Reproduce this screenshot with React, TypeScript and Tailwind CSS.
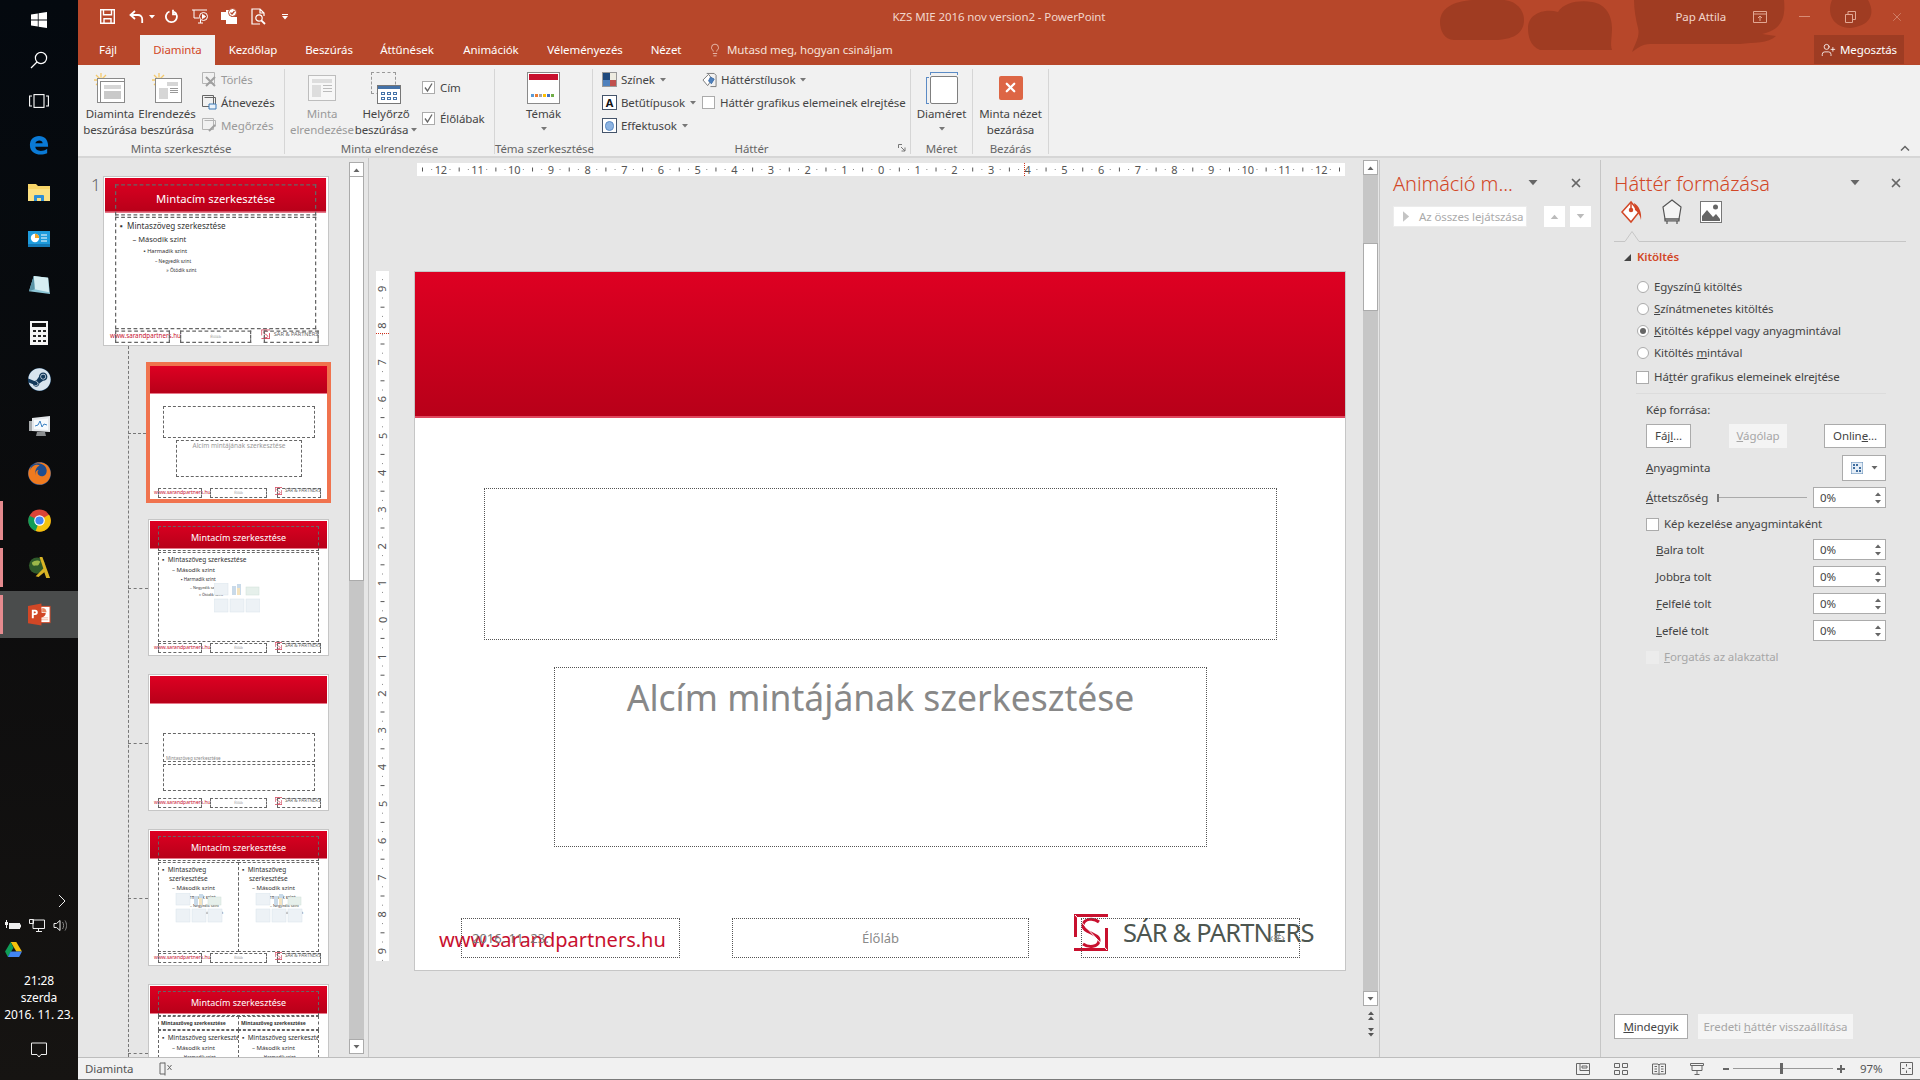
import type { ReactNode } from "react";
import { Lightbulb, UserPlus, X } from "lucide-react";
import { FaFirefox, FaSteam } from "react-icons/fa";

const sat = "#b7472a";

function Caret({ className = "" }: { className?: string }) {
  return (
    <svg viewBox="0 0 6 4" className={"w-[6px] h-[4px] " + className}>
      <path d="M0 0h6L3 3.5z" fill="currentColor" />
    </svg>
  );
}

function TaskIcon({ children, active, mark }: { children: ReactNode; active?: boolean; mark?: boolean }) {
  return (
    <div className={"relative h-[47px] flex items-center justify-center " + (active ? "bg-[#4a4c4c]" : "")}>
      {mark && <div className="absolute left-0 top-[4px] bottom-[4px] w-[3px] bg-[#e58a8e]" />}
      {children}
    </div>
  );
}

function Taskbar() {
  return (
    <div className="w-[78px] h-full shrink-0 flex flex-col bg-gradient-to-b from-[#04090f] via-[#0c0c0d] to-[#161412] text-white">
      <div className="h-[40px] flex items-center justify-center">
        <svg viewBox="0 0 16 16" className="w-[16px] h-[16px]" fill="#fff">
          <path d="M0 2.4 6.8 1.4V7.6H0zM7.6 1.3 16 0V7.6H7.6zM0 8.4H6.8V14.6L0 13.6zM7.6 8.4H16V16L7.6 14.7z" />
        </svg>
      </div>
      <div className="h-[40px] flex items-center justify-center">
        <svg viewBox="0 0 18 18" className="w-[18px] h-[18px]" fill="none" stroke="#fff" strokeWidth="1.2">
          <circle cx="11" cy="7" r="5.6" />
          <path d="M7 11 1 17" />
        </svg>
      </div>
      <div className="h-[41px] flex items-center justify-center">
        <svg viewBox="0 0 20 14" className="w-[20px] h-[14px]" fill="none" stroke="#fff" strokeWidth="1.1">
          <rect x="5" y="0.6" width="10" height="12.8" />
          <path d="M3 2H.6v10H3M17 2h2.4v10H17" />
        </svg>
      </div>
      <TaskIcon>
        <svg viewBox="0 0 22 22" className="w-[20px] h-[20px]">
          <path
            fillRule="evenodd"
            d="M1 11C1 5 5 1 11 1c6 0 10 4 10 11v1H7c0 5 8 6 13 2v5c-7 3-19 2-19-9zM7 9h8c0-4-7-4-8 0z"
            fill="#0a7ad6"
          />
        </svg>
      </TaskIcon>
      <TaskIcon>
        <svg viewBox="0 0 22 20" className="w-[22px] h-[20px]">
          <path d="M0 2h8l2 2h12v15H0z" fill="#f8d568" />
          <path d="M0 7h22v12H0z" fill="#fce183" />
          <path d="M6 19v-5a1 1 0 0 1 1-1h8a1 1 0 0 1 1 1v5h-3v-3H9v3z" fill="#2f8fd6" />
        </svg>
      </TaskIcon>
      <TaskIcon>
        <svg viewBox="0 0 22 16" className="w-[22px] h-[16px]">
          <rect width="22" height="16" fill="#1e9bdc" />
          <circle cx="7" cy="7" r="4.2" fill="#fff" />
          <path d="M7 7V2.8A4.2 4.2 0 0 1 11.2 7z" fill="#f5a623" />
          <path d="M13 4h6M13 7h6M13 10h6" stroke="#fff" strokeWidth="1.2" />
          <path d="M0 13h22v3H0z" fill="#1378b5" />
        </svg>
      </TaskIcon>
      <TaskIcon>
        <svg viewBox="0 0 24 22" className="w-[23px] h-[21px]">
          <path d="M6 1 21 3l2 17L1 17z" fill="#8fc8d8" />
          <path d="M6 1 21 3l1 15-15-3z" fill="#d6eef2" />
          <path d="M1 17 6 1l1 14z" fill="#5b94a6" />
        </svg>
      </TaskIcon>
      <TaskIcon>
        <svg viewBox="0 0 18 24" className="w-[18px] h-[24px]">
          <rect width="18" height="24" fill="#f4f4f4" />
          <rect x="2" y="2" width="14" height="4" fill="#111" />
          <path d="M3 9h3v2H3zM8 9h3v2H8zM13 9h3v2h-3zM3 14h3v2H3zM8 14h3v2H8zM13 14h3v2h-3zM3 19h3v2H3zM8 19h3v2H8zM13 19h3v2h-3z" fill="#222" />
        </svg>
      </TaskIcon>
      <TaskIcon>
        <div className="w-[23px] h-[23px] rounded-full bg-[#143a5c] flex items-center justify-center">
          <FaSteam className="w-[23px] h-[23px] text-[#d8e4ee]" />
        </div>
      </TaskIcon>
      <TaskIcon>
        <svg viewBox="0 0 24 22" className="w-[24px] h-[22px]">
          <path d="M2 5h4v10H2z" fill="#a9acae" />
          <path d="M5 2 23 0v16L5 15z" fill="#e4e7ea" />
          <path d="M7 4l14-1.5V14L7 13z" fill="#f7fafc" />
          <path d="M8 10l3-1 2-4 2 6 2-3 3 1" fill="none" stroke="#3b82c4" strokeWidth="1" />
          <path d="M10 16h8l1 4H9z" fill="#8a8d8f" />
        </svg>
      </TaskIcon>
      <TaskIcon>
        <div className="w-[23px] h-[23px] rounded-full bg-[#1f4d8f] flex items-center justify-center">
          <FaFirefox className="w-[23px] h-[23px] text-[#ef7a1f]" />
        </div>
      </TaskIcon>
      <TaskIcon mark>
        <svg viewBox="0 0 24 24" className="w-[23px] h-[23px]">
          <circle cx="12" cy="12" r="11.5" fill="#db4437" />
          <path d="M12 12 22 6a11.5 11.5 0 0 1-5 16.8z" fill="#f4c20d" />
          <path d="M12 12 7 22.5A11.5 11.5 0 0 0 17 22.8L22 6z" fill="#f4c20d" />
          <path d="M12 12 1.5 7A11.5 11.5 0 0 0 8 23z" fill="#0f9d58" />
          <circle cx="12" cy="12" r="5.5" fill="#fff" />
          <circle cx="12" cy="12" r="4.3" fill="#4285f4" />
        </svg>
      </TaskIcon>
      <TaskIcon mark>
        <svg viewBox="0 0 24 24" className="w-[23px] h-[23px]">
          <circle cx="9.5" cy="10" r="8.5" fill="#2f5a2a" />
          <path d="M4 7c3-3 7-3 9-1-2 2-1 4-4 4S5 11 4 7z" fill="#9cb84a" />
          <path d="M12 1h3l8 22h-4l-2-6-6 5-3-1 8-8z" fill="#d9b425" />
        </svg>
      </TaskIcon>
      <TaskIcon active mark>
        <svg viewBox="0 0 24 24" className="w-[23px] h-[23px]">
          <rect x="9" y="3.5" width="14" height="17" fill="#fff" stroke="#d24726" />
          <path d="M14 6a4.5 4.5 0 1 0 4.5 4.5H14z" fill="#d24726" />
          <path d="M15 5.5a4 4 0 0 1 4 4h-4zM13 15.5h8M13 17.5h8" fill="#e9855f" stroke="#e9855f" strokeWidth=".6" />
          <path d="M0 3 14 .6v22.8L0 21z" fill="#d24726" />
          <path d="M4 7h3.5a2.7 2.7 0 0 1 0 5.4H6V16H4zM6 8.8v1.900h1.200a.95.95 0 0 0 0-1.900z" fill="#fff" />
        </svg>
      </TaskIcon>

      <div className="mt-auto pb-[10px] flex flex-col">
        <div className="h-[20px] flex items-center justify-end pr-[12px]">
          <svg viewBox="0 0 8 14" className="w-[8px] h-[14px]" fill="none" stroke="#eee" strokeWidth="1">
            <path d="M1 1l6 6-6 6" />
          </svg>
        </div>
        <div className="h-[26px] mt-px flex items-center gap-[8px] pl-[5px]">
          <svg viewBox="0 0 16 12" className="w-[16px] h-[12px]" fill="#eee">
            <path d="M4 4h11v6H4zM15 5.5h1v3h-1zM0 3h1V1h1v2h1v3H2v3H1V6H0z" />
          </svg>
          <svg viewBox="0 0 16 13" className="w-[16px] h-[13px]" fill="none" stroke="#eee">
            <path d="M4 1h11.5v8.5H4zM.5.5h4v4h-4zM7 12.5h6M9.5 9.500v3" />
          </svg>
          <svg viewBox="0 0 16 13" className="w-[16px] h-[13px]" fill="none" stroke="#eee">
            <path d="M1 4.5h2.5L7 1.5v10l-3.500-3H1z" />
            <path d="M9.5 3c1.500 2 1.500 5 0 7M12 1.500c2 3 2 7 0 10" stroke="#888" />
          </svg>
        </div>
        <div className="h-[22px] flex items-center pl-[5px]">
          <svg viewBox="0 0 18 16" className="w-[17px] h-[15px]">
            <path d="M6 0h6l6 10h-6z" fill="#f4c20d" />
            <path d="M6 0 0 10l3 6 6-10z" fill="#0f9d58" />
            <path d="M3 16h12l3-6H6z" fill="#4285f4" />
          </svg>
        </div>
        <div className="mt-[12px] text-[12px] leading-[17px] text-center">
          <div>21:28</div>
          <div>szerda</div>
          <div>2016. 11. 23.</div>
        </div>
        <div className="h-[40px] mt-[7px] flex items-center justify-center">
          <svg viewBox="0 0 16 16" className="w-[16px] h-[16px]" fill="none" stroke="#eee">
            <path d="M.5 1h15v11.5H10L8 15l-2-2.500H.5z" />
          </svg>
        </div>
      </div>
    </div>
  );
}

function QatIcons() {
  return (
    <div className="flex items-center h-[33px] text-white">
      <svg viewBox="0 0 15 15" className="w-[15px] h-[15px] ml-[22px]" fill="none" stroke="#fff" strokeWidth="1.4">
        <path d="M.7.7h13.6v13.6H.7zM3.5.7v5h8v-5M4 14.3V9.800h7v4.500" />
      </svg>
      <svg viewBox="0 0 15 14" className="w-[15px] h-[14px] ml-[14px]" fill="none" stroke="#fff" strokeWidth="1.8">
        <path d="M6 1 1.5 5 6 9M2 5h7a4.2 4.2 0 0 1 4.2 4.2V13" />
      </svg>
      <Caret className="ml-[5px] text-white" />
      <svg viewBox="0 0 14 15" className="w-[14px] h-[15px] ml-[9px]" fill="none" stroke="#fff" strokeWidth="1.8">
        <path d="M5.5 2.5a5.5 5.5 0 1 0 4.5.3M9 .8v4.500h3.800" />
      </svg>
      <svg viewBox="0 0 17 16" className="w-[17px] h-[16px] ml-[14px]" fill="none" stroke="#fff">
        <path d="M0 1h15M2 1v8h5M6 14h5M8.5 11v3" />
        <circle cx="11.5" cy="7.5" r="4" />
        <path d="M10.5 5.5v4l3-2z" fill="#fff" />
      </svg>
      <svg viewBox="0 0 18 17" className="w-[18px] h-[17px] ml-[11px]">
        <path d="M1 4h5V2h4v2h1v5h6v7H6v-4H1z" fill="#fff" />
        <circle cx="12.5" cy="4.5" r="4" fill="#fff" stroke={sat} />
        <path d="M10.5 4.5l1.500 1.500 2.500-3" fill="none" stroke={sat} strokeWidth="1.2" />
      </svg>
      <svg viewBox="0 0 15 17" className="w-[15px] h-[17px] ml-[13px]" fill="none" stroke="#fff" strokeWidth="1.2">
        <path d="M9 16H1V1h8l4 4v3M9 1v4h4" />
        <circle cx="8" cy="10" r="3.2" />
        <path d="M10.3 12.3 14 16" strokeWidth="1.8" />
      </svg>
      <div className="ml-[16px] flex flex-col items-center gap-[1px]">
        <div className="w-[6px] h-px bg-white" />
        <Caret className="text-white" />
      </div>
    </div>
  );
}

const tabs: { label: string; cls: string }[] = [
  { label: "Kezdőlap", cls: "w-[70px] pl-[6px]" },
  { label: "Beszúrás", cls: "w-[88px]" },
  { label: "Áttűnések", cls: "w-[68px]" },
  { label: "Animációk", cls: "w-[100px]" },
  { label: "Véleményezés", cls: "w-[88px]" },
  { label: "Nézet", cls: "w-[74px]" },
];

function TitleBar() {
  return (
    <div className="relative h-[65px] shrink-0 bg-[#b7472a] text-white overflow-hidden">
      <svg viewBox="0 0 440 52" className="absolute left-[1362px] top-0 w-[440px] h-[52px]" fill="#a03c22">
        <path d="M0 22C0 6 18 0 36 0h26c14 0 22 10 22 20 0 14-12 20-30 20-8 0-16 0-24 0L14 40C4 40 0 30 0 22z" />
        <path d="M88 28C88 14 104 8 118 12 124 2 140 0 152 2c14 2 20 14 20 26 0 10-2 16 0 22H100C90 46 88 36 88 28z" />
        <path d="M194 0h150c2 20-4 30-22 34l14 2c-8 8-22 6-36 8H210c-8 0-12 4-18 8 4-10 8-16 6-24-2-8-4-18-4-28z" />
        <path d="M392 0h36c8 14 2 26-18 28-16 0-24-14-18-28z" />
      </svg>
      <div className="relative grid grid-cols-[1fr_auto_1fr] h-[35px]">
        <QatIcons />
        <div className="flex items-center h-[33px] text-[11.5px] text-[#f2d6cc]">KZS MIE 2016 nov version2 - PowerPoint</div>
        <div className="flex items-center justify-end h-[33px] text-[11.5px] text-[#f2d6cc]">
          <span className="mr-[27px]">Pap Attila</span>
          <svg viewBox="0 0 14 12" className="w-[14px] h-[12px] mr-[32px]" fill="none" stroke="#e2a793">
            <path d="M.5.5h13v11H.5zM.5 3h13M7 10V5M5 7l2-2 2 2" />
          </svg>
          <div className="w-[11px] h-px bg-[#d88c75] mr-[35px]" />
          <svg viewBox="0 0 11 12" className="w-[11px] h-[12px] mr-[34px]" fill="none" stroke="#e2a793">
            <path d="M.5 3.5h7v8h-7zM3 3.5V.5h7.500v8H7.500" />
          </svg>
          <X className="w-[14px] h-[14px] mr-[16px] text-[#e2a793]" strokeWidth={1} />
        </div>
      </div>
      <div className="relative flex items-stretch h-[30px] text-[11.5px]">
        <div className="ml-[4px] w-[52px] flex items-center justify-center">Fájl</div>
        <div className="ml-[6px] w-[75px] flex items-center justify-center bg-[#f1f1f1] text-[#d24726]">Diaminta</div>
        {tabs.map((t) => (
          <div key={t.label} className={t.cls + " flex items-center justify-center"}>
            {t.label}
          </div>
        ))}
        <div className="ml-[5px] flex items-center text-[#f6e2da]">
          <Lightbulb className="w-[14px] h-[16px] mr-[5px]" strokeWidth={1.2} />
          Mutasd meg, hogyan csináljam
        </div>
        <div className="ml-auto mr-[16px] mb-px w-[90px] bg-[#9e3c23] flex items-center justify-center gap-[4px]">
          <UserPlus className="w-[15px] h-[16px]" strokeWidth={1.3} />
          Megosztás
        </div>
      </div>
    </div>
  );
}

function Group({ w, label, children, launcher }: { w: string; label: string; children: ReactNode; launcher?: boolean }) {
  return (
    <div className={w + " relative h-[85px] mt-[4px] border-r border-[#d6d6d6] flex flex-col"}>
      <div className="h-[70px] shrink-0 flex items-start">{children}</div>
      <div className="shrink-0 text-center text-[11.5px] leading-[15px] text-[#666] mt-[2px] whitespace-nowrap">{label}</div>
      {launcher && (
        <svg viewBox="0 0 8 8" className="absolute right-[4px] bottom-[2px] w-[8px] h-[8px]" fill="none" stroke="#777">
          <path d="M.5 4V.5H4M3 3l4 4M7 3.5V7H3.5" />
        </svg>
      )}
    </div>
  );
}

function BigBtn({ w, icon, lines, caret, dim, ml }: { w: string; icon: ReactNode; lines: ReactNode[]; caret?: boolean; dim?: boolean; ml?: string }) {
  return (
    <div className={w + " " + (ml ?? "") + " flex flex-col items-center " + (dim ? "text-[#9a9a9a]" : "text-[#444]")}>
      <div className="h-[37px] w-full flex items-center justify-center">{icon}</div>
      <div className="text-[11.5px] leading-[16px] text-center whitespace-nowrap">
        {lines.map((l, i) => (
          <div key={i}>{l}</div>
        ))}
      </div>
      {caret && <Caret className="mt-[5px] text-[#777]" />}
    </div>
  );
}

function SmallBtn({ icon, label, dim, caret }: { icon: ReactNode; label: string; dim?: boolean; caret?: boolean }) {
  return (
    <div className={"h-[23px] flex items-center gap-[4px] text-[11.5px] whitespace-nowrap " + (dim ? "text-[#9a9a9a]" : "text-[#444]")}>
      <div className="w-[15px] h-[16px] flex items-center justify-center shrink-0">{icon}</div>
      {label}
      {caret && <Caret className="text-[#777] ml-[1px]" />}
    </div>
  );
}

function CheckBox({ on, dim, white = true }: { on?: boolean; dim?: boolean; white?: boolean }) {
  return (
    <div className={"w-[13px] h-[13px] shrink-0 border flex items-center justify-center " + (dim ? "border-[#ececec] bg-[#ececec]" : "border-[#ababab]") + " " + (white ? "bg-white" : "")}>
      {on && (
        <svg viewBox="0 0 11 11" className="w-[11px] h-[11px]" fill="none" stroke="#666" strokeWidth="1.3">
          <path d="M2 5.5 4.5 9 9 1.5" />
        </svg>
      )}
    </div>
  );
}

function Sun() {
  return (
    <svg viewBox="0 0 14 14" className="absolute left-0 top-0 w-[14px] h-[14px]">
      <path d="M7 0v14M0 7h14M2 2l10 10M12 2 2 12" stroke="#f4c96c" strokeWidth="1.3" />
      <circle cx="7" cy="7" r="3" fill="#fbe3a8" />
    </svg>
  );
}

function Ribbon() {
  return (
    <div className="relative h-[93px] shrink-0 bg-[#f1f1f1] border-b-2 border-[#d6d6d6] flex">
      <Group w="w-[207px]" label="Minta szerkesztése">
        <div className="flex pl-[2px]">
          <BigBtn
            w="w-[60px]"
            lines={["Diaminta", "beszúrása"]}
            icon={
              <div className="relative w-[32px] h-[30px]">
                <Sun />
                <div className="absolute left-[3px] top-[5px] w-[28px] h-[25px] border border-[#8a8a8a] bg-white" />
                <div className="absolute left-[6px] top-[8px] w-[25px] h-[22px] border border-[#8a8a8a] bg-white p-[3px] flex flex-col gap-[2px]">
                  <div className="h-[4px] bg-[#d6d6d6]" />
                  <div className="flex-1 bg-[#c9c9c9]" />
                </div>
              </div>
            }
          />
          <BigBtn
            w="w-[54px]"
            lines={["Elrendezés", "beszúrása"]}
            icon={
              <div className="relative w-[30px] h-[30px]">
                <Sun />
                <div className="absolute left-[3px] top-[5px] w-[27px] h-[25px] border border-[#8a8a8a] bg-white p-[3px] flex flex-col gap-[2px]">
                  <div className="h-[4px] bg-[#d6d6d6] ml-[8px]" />
                  <div className="flex-1 flex gap-[2px]">
                    <div className="w-[9px] bg-[#d6d6d6]" />
                    <div className="flex-1 flex flex-col gap-[1px]">
                      <div className="h-px bg-[#999]" />
                      <div className="h-px bg-[#999]" />
                      <div className="h-px bg-[#999]" />
                    </div>
                  </div>
                </div>
              </div>
            }
          />
          <div className="ml-[8px] -mt-px flex flex-col">
            <SmallBtn
              dim
              label="Törlés"
              icon={
                <svg viewBox="0 0 15 15" className="w-[15px] h-[15px]" fill="none" stroke="#b5b5b5">
                  <path d="M.5.5h12v11H.5z" />
                  <path d="M4 5l9 9M13 5l-9 9" stroke="#a0a0a0" strokeWidth="2" />
                </svg>
              }
            />
            <SmallBtn
              label="Átnevezés"
              icon={
                <svg viewBox="0 0 15 15" className="w-[15px] h-[15px]" fill="none" stroke="#666">
                  <path d="M.5.5h11v11H.5zM2.5 2.5h11v11" />
                  <path d="M7 9h7v5H7z" fill="#eaf2fa" stroke="#3b78b5" />
                </svg>
              }
            />
            <SmallBtn
              dim
              label="Megőrzés"
              icon={
                <svg viewBox="0 0 15 15" className="w-[15px] h-[15px]" fill="none" stroke="#b5b5b5">
                  <path d="M.5.5h11v11H.5zM2.5 2.5h11v6" />
                  <path d="M7 13l3-3 3-3" stroke="#a0a0a0" strokeWidth="2" />
                </svg>
              }
            />
          </div>
        </div>
      </Group>
      <Group w="w-[210px]" label="Minta elrendezése">
        <div className="flex pl-[6px]">
          <BigBtn
            w="w-[62px]"
            dim
            lines={["Minta", "elrendezése"]}
            icon={
              <div className="w-[28px] h-[26px] border border-[#bdbdbd] bg-[#f7f7f7] p-[3px] flex flex-col gap-[2px]">
                <div className="h-[4px] bg-[#ddd]" />
                <div className="flex-1 flex gap-[2px]">
                  <div className="w-[9px] bg-[#ddd]" />
                  <div className="flex-1 flex flex-col gap-[2px]">
                    <div className="h-px bg-[#bbb]" />
                    <div className="h-px bg-[#bbb]" />
                    <div className="h-px bg-[#bbb]" />
                  </div>
                </div>
              </div>
            }
          />
          <BigBtn
            w="w-[58px]"
            ml="ml-[4px]"
            lines={[
              "Helyőrző",
              <span className="inline-flex items-center gap-[3px]" key="b">
                beszúrása
                <Caret className="text-[#777]" />
              </span>,
            ]}
            icon={
              <div className="relative w-[30px] h-[32px]">
                <div className="absolute left-0 top-0 w-[25px] h-[22px] border border-dashed border-[#999]" />
                <div className="absolute left-[6px] top-[13px] w-[24px] h-[19px] border border-[#777] bg-white">
                  <div className="h-[3px] bg-[#4472a8]" />
                  <div className="grid grid-cols-3 gap-[2px] p-[3px]">
                    {[0, 1, 2, 3, 4, 5].map((i) => (
                      <div key={i} className="h-[3px] border border-[#4472a8]" />
                    ))}
                  </div>
                </div>
              </div>
            }
          />
          <div className="ml-[7px] text-[11.5px] text-[#444] flex flex-col">
            <div className="h-[31px] mt-[3px] flex items-center gap-[5px]">
              <CheckBox on />
              Cím
            </div>
            <div className="h-[31px] flex items-center gap-[5px]">
              <CheckBox on />
              Élőlábak
            </div>
          </div>
        </div>
      </Group>
      <Group w="w-[98px]" label="Téma szerkesztése">
        <div className="w-full">
          <BigBtn
            w="w-full"
            lines={["Témák"]}
            caret
            icon={
              <div className="w-[33px] h-[32px] border border-[#8a8a8a] bg-white flex flex-col p-px">
                <div className="h-[6px] bg-[#c8102e]" />
                <div className="flex-1" />
                <div className="flex gap-px px-[2px] pb-[5px]">
                  {["bg-[#5b9bd5]", "bg-[#ed7d31]", "bg-[#a5a5a5]", "bg-[#ffc000]", "bg-[#4472c4]", "bg-[#70ad47]"].map((c) => (
                    <div key={c} className={c + " w-[3px] h-[3px]"} />
                  ))}
                </div>
              </div>
            }
          />
        </div>
      </Group>
      <Group w="w-[318px]" label="Háttér" launcher>
        <div className="flex pl-[9px] -mt-px">
          <div className="w-[100px] flex flex-col">
            <SmallBtn
              label="Színek"
              caret
              icon={
                <div className="w-[15px] h-[15px] grid grid-cols-2 border border-[#999]">
                  <div className="bg-[#1f497d]" />
                  <div className="bg-[#eeece1]" />
                  <div className="bg-[#4f81bd]" />
                  <div className="bg-[#c0504d]" />
                </div>
              }
            />
            <SmallBtn
              label="Betűtípusok"
              caret
              icon={
                <div className="w-[15px] h-[15px] border border-[#44546a] bg-white flex items-center justify-center text-[11px] leading-none text-[#111] font-bold">A</div>
              }
            />
            <SmallBtn
              label="Effektusok"
              caret
              icon={
                <div className="w-[15px] h-[15px] border border-[#44546a] bg-white flex items-center justify-center">
                  <div className="w-[9px] h-[10px] rounded-full bg-[#8db4e2] border border-[#5b8bc5]" />
                </div>
              }
            />
          </div>
          <div className="flex flex-col">
            <SmallBtn
              label="Háttérstílusok"
              caret
              icon={
                <svg viewBox="0 0 16 16" className="w-[16px] h-[16px]" fill="none" stroke="#777">
                  <path d="M1 8l6-6 4 5-5 7z" fill="#fff" />
                  <path d="M5 1h8l2 2v12H9" />
                  <path d="M9 5l4 2-3 5-3-3z" fill="#4f81bd" stroke="#3b6ca8" />
                </svg>
              }
            />
            <div className="h-[23px] flex items-center gap-[5px] text-[11.5px] text-[#444] whitespace-nowrap">
              <CheckBox />
              Háttér grafikus elemeinek elrejtése
            </div>
          </div>
        </div>
      </Group>
      <Group w="w-[62px]" label="Méret">
        <div className="w-full">
          <BigBtn
            w="w-full"
            lines={["Diaméret"]}
            caret
            icon={
              <div className="relative w-[32px] h-[32px]">
                <div className="absolute left-[4px] top-0 right-0 h-[3px] border-x border-t border-[#5b8bc5]" />
                <div className="absolute left-0 top-[5px] bottom-0 w-[3px] border-y border-l border-[#5b8bc5]" />
                <div className="absolute left-[4px] top-[4px] right-0 bottom-0 rounded-[2px] border border-[#7f7f7f] bg-white" />
              </div>
            }
          />
        </div>
      </Group>
      <Group w="w-[76px]" label="Bezárás">
        <div className="w-full">
          <BigBtn
            w="w-full"
            lines={["Minta nézet", "bezárása"]}
            icon={
              <div className="w-[24px] h-[24px] rounded-[2px] bg-[#dd6645] flex items-center justify-center">
                <X className="w-[15px] h-[15px] text-white" strokeWidth={3.6} />
              </div>
            }
          />
        </div>
      </Group>
      <svg viewBox="0 0 10 6" className="absolute right-[10px] bottom-[5px] w-[10px] h-[6px]" fill="none" stroke="#666" strokeWidth="1.5">
        <path d="M1 5.5 5 1.5l4 4" />
      </svg>
    </div>
  );
}

const ph = "absolute border border-dashed border-[#666]";

function MiniFooter() {
  return (
    <>
      <div className="absolute left-[4px] top-[123px] text-[5px] leading-[7px] text-[#c8102e] whitespace-nowrap">www.sarandpartners.hu</div>
      <div className={ph + " left-[8px] top-[122px] w-[44px] h-[10px]"} />
      <div className={ph + " left-[60px] top-[122px] w-[57px] h-[10px] flex items-center justify-center text-[3px] text-[#999]"}>Élőláb</div>
      <LogoMark className="absolute left-[125px] top-[121px] w-[7px] h-[8px]" />
      <div className="absolute left-[135px] top-[121px] text-[4.5px] leading-[7px] text-[#666] whitespace-nowrap">SÁR & PARTNERS</div>
      <div className={ph + " left-[127px] top-[122px] w-[44px] h-[10px]"} />
    </>
  );
}

function MiniTitle() {
  return <div className={ph + " left-[8px] top-[5px] w-[161px] h-[25px] pb-[2px] flex items-center justify-center text-white text-[9px]"}>Mintacím szerkesztése</div>;
}

function MiniList({ compact }: { compact?: boolean }) {
  return (
    <div className="pl-[3px] pt-[2px] text-[#333] whitespace-nowrap overflow-hidden">
      <div className="text-[6.5px] leading-[10px]">▪ &nbsp;{compact ? "Mintaszöveg" : "Mintaszöveg szerkesztése"}</div>
      {compact && <div className="text-[6.5px] leading-[8px] pl-[7px]">szerkesztése</div>}
      <div className="text-[6px] leading-[10px] pl-[10px]">– Második szint</div>
      <div className="text-[4.5px] leading-[9px] pl-[19px]">▪ Harmadik szint</div>
      <div className="text-[3.8px] leading-[7px] pl-[28px]">– Negyedik szint</div>
      <div className="text-[3.8px] leading-[7px] pl-[37px]">» Ötödik szint</div>
    </div>
  );
}

function PaleIcons({ className }: { className: string }) {
  return (
    <svg viewBox="0 0 46 30" className={"absolute " + className}>
      <g fill="#edf2f6" stroke="#d8e2ea" strokeWidth=".5">
        <rect x="0" y="0" width="14" height="12" />
        <rect x="0" y="16" width="14" height="13" />
        <rect x="16" y="16" width="14" height="13" />
        <rect x="32" y="16" width="14" height="13" />
      </g>
      <path d="M18 12V3h4v9zM23 12V1h4v11z" fill="#c9dae9" />
      <path d="M23 12V5h3v7z" fill="#f4e3bf" />
      <rect x="32" y="4" width="13" height="8" fill="#e6f0eb" stroke="#cfe0d8" strokeWidth=".5" />
    </svg>
  );
}

function Mini({ kind }: { kind: number }) {
  return (
    <div className="relative w-[177px] h-[133px] bg-white overflow-hidden tracking-normal">
      <div className="h-[28px] bg-gradient-to-b from-[#de0022] to-[#b80019] border-b border-[#e6788a]" />
      {kind === 1 && (
        <>
          <MiniTitle />
          <div className={ph + " left-[8px] top-[31px] w-[161px] h-[90px]"}>
            <MiniList />
          </div>
        </>
      )}
      {kind === 2 && (
        <>
          <div className={ph + " left-[13px] top-[40px] w-[152px] h-[32px]"} />
          <div className={ph + " left-[26px] top-[74px] w-[126px] h-[37px] text-center text-[6.5px] leading-[10px] text-[#999]"}>Alcím mintájának szerkesztése</div>
        </>
      )}
      {kind === 3 && (
        <>
          <MiniTitle />
          <div className={ph + " left-[8px] top-[31px] w-[161px] h-[90px]"}>
            <MiniList />
            <PaleIcons className="left-[55px] top-[30px] w-[46px] h-[30px]" />
          </div>
        </>
      )}
      {kind === 4 && (
        <>
          <div className={ph + " left-[13px] top-[57px] w-[152px] h-[29px]"}>
            <div className="absolute left-[2px] bottom-0 text-[4.5px] leading-[6px] text-[#888] whitespace-nowrap">Mintaszöveg szerkesztése</div>
          </div>
          <div className={ph + " left-[13px] top-[88px] w-[152px] h-[27px]"} />
        </>
      )}
      {kind === 5 && (
        <>
          <MiniTitle />
          <div className={ph + " left-[8px] top-[31px] w-[81px] h-[90px]"}>
            <MiniList compact />
            <PaleIcons className="left-[16px] top-[30px] w-[48px] h-[30px]" />
          </div>
          <div className={ph + " left-[88px] top-[31px] w-[81px] h-[90px]"}>
            <MiniList compact />
            <PaleIcons className="left-[16px] top-[30px] w-[48px] h-[30px]" />
          </div>
        </>
      )}
      {kind === 6 && (
        <>
          <MiniTitle />
          <div className={ph + " left-[8px] top-[30px] w-[81px] h-[14px] text-[5px] font-bold text-[#333] pl-[2px] leading-[12px] whitespace-nowrap overflow-hidden"}>Mintaszöveg szerkesztése</div>
          <div className={ph + " left-[88px] top-[30px] w-[81px] h-[14px] text-[5px] font-bold text-[#333] pl-[2px] leading-[12px] whitespace-nowrap overflow-hidden"}>Mintaszöveg szerkesztése</div>
          <div className={ph + " left-[8px] top-[44px] w-[81px] h-[78px]"}>
            <MiniList />
          </div>
          <div className={ph + " left-[88px] top-[44px] w-[81px] h-[78px]"}>
            <MiniList />
          </div>
        </>
      )}
      {kind !== 6 && <MiniFooter />}
    </div>
  );
}

function ThumbRow({ kind, selected }: { kind: number; selected?: boolean }) {
  return (
    <div className={"relative h-[155px] shrink-0 flex items-center justify-end " + (selected ? "pr-[18px]" : "pr-[20px]")}>
      <div className={"absolute left-[50px] top-1/2 h-px border-t border-dashed border-[#777] " + (selected ? "w-[18px]" : "w-[20px]")} />
      <div className={selected ? "border-[4px] border-[#f0734e]" : "border border-[#c6c6c6] p-px bg-white"}>
        <Mini kind={kind} />
      </div>
    </div>
  );
}

function ThumbPane() {
  return (
    <div className="relative w-[271px] shrink-0 overflow-hidden flex flex-col">
      <div className="absolute left-[50px] top-[188px] bottom-0 border-l border-dashed border-[#777]" />
      <div className="relative h-[188px] shrink-0 pt-[18px] flex justify-end pr-[20px] mb-[9px]">
        <div className="absolute left-[13px] top-[14px] text-[17px] font-light text-[#666]">1</div>
        <div className="border border-[#c6c6c6] p-px bg-white h-[170px]">
          <div className="w-[222px] h-[166px]">
            <div className="scale-125 origin-top-left w-[177px]">
              <Mini kind={1} />
            </div>
          </div>
        </div>
      </div>
      <ThumbRow kind={2} selected />
      <ThumbRow kind={3} />
      <ThumbRow kind={4} />
      <ThumbRow kind={5} />
      <ThumbRow kind={6} />
    </div>
  );
}

function ScrollBtn({ up, bordered = true }: { up: boolean; bordered?: boolean }) {
  return (
    <div className={"w-[15px] h-[15px] shrink-0 flex items-center justify-center " + (bordered ? "bg-white border border-[#ababab]" : "")}>
      <Caret className={"text-[#666] w-[7px] " + (up ? "rotate-180" : "")} />
    </div>
  );
}

function TopRuler() {
  const marks: ReactNode[] = [];
  for (let i = -50; i <= 50; i++) {
    const x = 464 + i * 9.17;
    if (i % 4 === 0) {
      marks.push(
        <text key={i} x={x} y={10.5} textAnchor="middle" fontSize="11" fill="#555" fontFamily="Noto Sans, sans-serif">
          {Math.abs(i / 4)}
        </text>
      );
    } else if (i % 2 === 0) {
      marks.push(<path key={i} d={`M${x} 4.5v4`} stroke="#555" />);
    } else {
      marks.push(<path key={i} d={`M${x} 6v1`} stroke="#888" />);
    }
  }
  return (
    <svg viewBox="0 0 928 13" className="w-[928px] h-[13px] bg-white">
      {marks}
      <path d="M607.5 0v13" stroke="#d2321c" strokeDasharray="1 1" />
    </svg>
  );
}

function LeftRuler() {
  const marks: ReactNode[] = [];
  for (let i = -37; i <= 37; i++) {
    const y = 349 + i * 9.2;
    if (i % 4 === 0) {
      marks.push(
        <text key={i} x="6.5" y={y + 4} textAnchor="middle" fontSize="11" fill="#555" fontFamily="Noto Sans, sans-serif" transform={`rotate(-90 6.5 ${y})`}>
          {Math.abs(i / 4)}
        </text>
      );
    } else if (i % 2 === 0) {
      marks.push(<path key={i} d={`M4.5 ${y}h4`} stroke="#555" />);
    } else {
      marks.push(<path key={i} d={`M6 ${y}h1`} stroke="#888" />);
    }
  }
  return (
    <svg viewBox="0 0 13 690" className="w-[13px] h-[690px] bg-white shrink-0">
      {marks}
      <path d="M0 62.5h13" stroke="#d2321c" strokeDasharray="1 1" />
    </svg>
  );
}

function LogoMark({ className }: { className: string }) {
  return (
    <svg viewBox="0 0 34 37" className={className} fill="none" stroke="#c8102e">
      <path d="M0 1.5h34M0 35.5h34" strokeWidth="3" />
      <path d="M1.5 1v22M32.5 14v22" strokeWidth="3" />
      <path d="M25 8C19 3 10 5 9 11c-1 8 17 8 16 16-1 6-10 7-16 3" strokeWidth="3" />
      <path d="M1 1 33 36" strokeWidth="1" stroke="#fff" />
    </svg>
  );
}

const dot = "absolute border border-dotted border-[#555]";

function Slide() {
  return (
    <div className="relative w-[932px] h-[700px] ml-[25px] bg-white border border-[#c6c6c6] overflow-hidden tracking-normal">
      <div className="h-[146px] bg-gradient-to-b from-[#de0022] to-[#b80019] border-b-2 border-[#e0485f]" />
      <div className={dot + " left-[69px] top-[216px] w-[793px] h-[152px]"} />
      <div className={dot + " left-[139px] top-[395px] w-[653px] h-[180px] text-center text-[#888] text-[35.5px] leading-[50px] pt-[4px]"}>Alcím mintájának szerkesztése</div>
      <div className="absolute left-[24px] top-[653px] text-[20px] leading-[30px] text-[#c8102e] whitespace-nowrap">www.sarandpartners.hu</div>
      <div className={dot + " left-[46px] top-[646px] w-[219px] h-[40px] pl-[10px] text-[13px] leading-[38px] text-[#777]"}>2016. 11. 23.</div>
      <div className={dot + " left-[317px] top-[646px] w-[297px] h-[40px] text-center text-[13px] leading-[38px] text-[#8a8a8a]"}>Élőláb</div>
      <LogoMark className="absolute left-[659px] top-[642px] w-[34px] h-[37px]" />
      <div className="absolute left-[708px] top-[641px] text-[25.5px] tracking-[-0.8px] leading-[38px] text-[#4d5650] whitespace-nowrap">SÁR & PARTNERS</div>
      <div className={dot + " left-[666px] top-[646px] w-[219px] h-[40px] pr-[14px] text-right text-[12px] leading-[38px] text-[#8a8a8a]"}>‹#›</div>
    </div>
  );
}

function AnimPane() {
  return (
    <div className="w-[221px] shrink-0 border-l border-[#c6c6c6] pl-[13px] mt-[2px] flex flex-col">
      <div className="h-[48px] flex items-center">
        <span className="text-[20px] font-light text-[#d24726] whitespace-nowrap">Animáció m...</span>
        <Caret className="ml-[15px] -mt-[3px] w-[10px] h-[6px] text-[#666]" />
        <X className="w-[14px] h-[14px] ml-[31px] -mt-[3px] text-[#666]" strokeWidth={3} />
      </div>
      <div className="flex items-stretch h-[21px] -mt-[2px]">
        <div className="w-[134px] bg-white border border-[#ececec] flex items-center text-[11.5px] text-[#aaa] pl-[8px] whitespace-nowrap">
          <Caret className="-rotate-90 -ml-[2px] w-[13px] h-[7px] text-[#c4c4c4] mr-[6px]" />
          Az összes lejátszása
        </div>
        <div className="ml-[17px] w-[21px] bg-white flex items-center justify-center">
          <Caret className="rotate-180 w-[9px] h-[5px] text-[#bbb]" />
        </div>
        <div className="ml-[5px] w-[21px] bg-white flex items-center justify-center">
          <Caret className="w-[9px] h-[5px] text-[#bbb]" />
        </div>
      </div>
    </div>
  );
}

function Radio({ on, children }: { on?: boolean; children: ReactNode }) {
  return (
    <div className="h-[22px] flex items-center pl-[36px] gap-[5px] text-[11.5px] text-[#444] whitespace-nowrap">
      <div className="w-[12px] h-[12px] rounded-full border border-[#ababab] bg-white flex items-center justify-center">
        {on && <div className="w-[6px] h-[6px] rounded-full bg-[#666]" />}
      </div>
      <span>{children}</span>
    </div>
  );
}

function Spin() {
  return (
    <div className="w-[73px] h-[21px] shrink-0 bg-white border border-[#ababab] flex items-center justify-between pl-[6px] pr-[4px] text-[11.5px] text-[#444]">
      0%
      <div className="flex flex-col gap-[4px]">
        <Caret className="rotate-180 text-[#666]" />
        <Caret className="text-[#666]" />
      </div>
    </div>
  );
}

function SpinRow({ children }: { children: ReactNode }) {
  return (
    <div className="h-[21px] mt-[6px] flex items-center justify-between pl-[10px] text-[11.5px] text-[#444] whitespace-nowrap">
      <span>{children}</span>
      <Spin />
    </div>
  );
}

function FormatPane() {
  return (
    <div className="flex-1 border-l border-[#c6c6c6] mt-[2px] flex flex-col">
      <div className="h-[48px] shrink-0 flex items-center pl-[13px] pr-[17px]">
        <span className="text-[20px] font-light text-[#d24726] whitespace-nowrap">Háttér formázása</span>
        <Caret className="ml-auto -mt-[3px] w-[10px] h-[6px] text-[#666]" />
        <X className="w-[14px] h-[14px] ml-[29px] -mt-[3px] text-[#666]" strokeWidth={3} />
      </div>
      <div className="flex items-center h-[24px] -mt-[8px] pl-[19px] shrink-0">
        <svg viewBox="0 0 24 24" className="w-[24px] h-[24px]" fill="none" stroke="#d24726" strokeWidth="1.5">
          <path d="M11 2 2 12l9 10 8-10z" fill="#fff" />
          <path d="M11 2v7" />
          <circle cx="11" cy="10" r="1.5" fill="#d24726" />
          <path d="M14 3c5 3 8 9 7 17-1-5-3-8-6-10z" fill="#d24726" stroke="none" />
        </svg>
        <svg viewBox="0 0 22 26" className="w-[22px] h-[26px] ml-[17px]" fill="none" stroke="#555" strokeWidth="1.2">
          <path d="M11 1 20 8l-2 12H4L2 8z" fill="#f4f4f4" />
          <path d="M4 20h14v2H4zM6 22v3M16 22v3" fill="#aaa" />
        </svg>
        <svg viewBox="0 0 22 22" className="w-[22px] h-[22px] ml-[17px]">
          <rect x=".5" y=".5" width="21" height="21" fill="#fff" stroke="#777" />
          <circle cx="15.5" cy="6" r="2.5" fill="#666" />
          <path d="M2 20V15l5-6 6 7 3-3 4 5v2z" fill="#666" />
        </svg>
      </div>
      <svg viewBox="0 0 292 12" className="w-[292px] h-[12px] ml-[13px] mt-[6px] shrink-0" fill="none" stroke="#c6c6c6">
        <path d="M0 11.5h11l7-10 7 10h267" />
      </svg>
      <div className="h-[22px] mt-[4px] flex items-center pl-[23px] shrink-0">
        <svg viewBox="0 0 7 7" className="w-[7px] h-[7px] text-[#444]">
          <path d="M7 0v7H0z" fill="currentColor" />
        </svg>
        <span className="ml-[6px] text-[11.5px] font-semibold text-[#d24726]">Kitöltés</span>
      </div>
      <div className="mt-[8px] shrink-0">
        <Radio>
          Egyszín<u>ű</u> kitöltés
        </Radio>
        <Radio>
          <u>S</u>zínátmenetes kitöltés
        </Radio>
        <Radio on>
          <u>K</u>itöltés képpel vagy anyagmintával
        </Radio>
        <Radio>
          Kitöltés <u>m</u>intával
        </Radio>
        <div className="h-[22px] mt-[2px] flex items-center pl-[35px] gap-[5px] text-[11.5px] text-[#444] whitespace-nowrap">
          <CheckBox />
          <span>
            Há<u>t</u>tér grafikus elemeinek elrejtése
          </span>
        </div>
      </div>
      <div className="ml-[35px] w-[250px] mt-[5px] border-t border-[#dcdcdc] shrink-0" />
      <div className="ml-[45px] w-[240px] shrink-0 text-[11.5px] text-[#444]">
        <div className="h-[20px] mt-[6px] flex items-center">Kép forrása:</div>
        <div className="h-[24px] mt-[4px] flex justify-between">
          <div className="w-[45px] bg-white border border-[#ababab] flex items-center justify-center">
            <span>
              Fáj<u>l</u>...
            </span>
          </div>
          <div className="w-[58px] bg-[#f4f4f4] text-[#a6a6a6] flex items-center justify-center ml-[38px]">
            <span>
              <u>V</u>ágólap
            </span>
          </div>
          <div className="w-[62px] bg-white border border-[#ababab] flex items-center justify-center ml-auto">
            <span>
              Onlin<u>e</u>...
            </span>
          </div>
        </div>
        <div className="h-[26px] mt-[7px] flex items-center justify-between">
          <span>
            <u>A</u>nyagminta
          </span>
          <div className="w-[44px] h-[26px] bg-white border border-[#ababab] flex items-center justify-center gap-[8px]">
            <svg viewBox="0 0 12 12" className="w-[12px] h-[12px]">
              <rect width="12" height="12" fill="#e4edf6" stroke="#5b86b3" />
              <path d="M2 2h2v2H2zM5 2h2v2H5zM2 5h2v2H2zM8 8h2v2H8zM5 8h2v2H5zM8 5h2v2H8z" fill="#3f6d9f" />
            </svg>
            <Caret className="text-[#666] w-[7px]" />
          </div>
        </div>
        <div className="h-[21px] mt-[6px] flex items-center whitespace-nowrap">
          <span>
            <u>Á</u>ttetszőség
          </span>
          <div className="ml-auto mr-[6px] w-[90px] h-[8px] flex items-center relative">
            <div className="w-[2px] h-[8px] bg-[#777]" />
            <div className="flex-1 h-px bg-[#aaa]" />
          </div>
          <Spin />
        </div>
        <div className="h-[22px] mt-[5px] flex items-center gap-[5px] whitespace-nowrap">
          <CheckBox />
          <span>
            Kép kezelése an<u>y</u>agmintaként
          </span>
        </div>
        <div className="-mt-[2px]">
          <SpinRow>
            <u>B</u>alra tolt
          </SpinRow>
          <SpinRow>
            Jobb<u>r</u>a tolt
          </SpinRow>
          <SpinRow>
            <u>F</u>elfelé tolt
          </SpinRow>
          <SpinRow>
            <u>L</u>efelé tolt
          </SpinRow>
        </div>
        <div className="h-[22px] mt-[5px] flex items-center gap-[5px] whitespace-nowrap text-[#a6a6a6]">
          <CheckBox dim white={false} />
          <span>
            <u>F</u>orgatás az alakzattal
          </span>
        </div>
      </div>
      <div className="mt-auto mb-[18px] pl-[13px] flex gap-[10px] text-[11.5px] shrink-0">
        <div className="w-[74px] h-[25px] bg-white border border-[#ababab] text-[#444] flex items-center justify-center">
          <span>
            <u>M</u>indegyik
          </span>
        </div>
        <div className="w-[155px] h-[25px] bg-[#f4f4f4] text-[#a6a6a6] flex items-center justify-center whitespace-nowrap">
          <span>
            Eredeti <u>h</u>áttér visszaállítása
          </span>
        </div>
      </div>
    </div>
  );
}

function StatusBar() {
  return (
    <div className="h-[23px] shrink-0 bg-[#f1f1f1] border-t border-[#bdbdbd] border-b border-b-[#7a7a7a] flex items-center text-[11.5px] text-[#555]">
      <span className="ml-[7px] w-[74px]">Diaminta</span>
      <svg viewBox="0 0 14 14" className="w-[14px] h-[14px]" fill="none" stroke="#666">
        <path d="M6 1H1v11h5M6 .5v13M8.5 3l4 5M12.5 3l-4 5" />
      </svg>
      <svg viewBox="0 0 14 12" className="w-[14px] h-[12px] ml-auto mr-[24px]" fill="none" stroke="#666">
        <path d="M.5.5h13v11H.5zM4 .5v7h9.5M6 3h5v2H6z" />
      </svg>
      <svg viewBox="0 0 14 12" className="w-[14px] h-[12px] mr-[24px]" fill="none" stroke="#666">
        <path d="M.5.5h5v4h-5zM8.5.5h5v4h-5zM.5 7.5h5v4h-5zM8.5 7.5h5v4h-5z" />
      </svg>
      <svg viewBox="0 0 14 12" className="w-[14px] h-[12px] mr-[24px]" fill="none" stroke="#666">
        <path d="M.5 1H6l1 1 1-1h5.5v10H8l-1 .5L6 11H.5zM7 2v9.5M2.500 3.500H5M2.500 6H5M2.500 8.500H5M9 3.500h2.500M9 6h2.500M9 8.500h2.500" />
      </svg>
      <svg viewBox="0 0 14 12" className="w-[14px] h-[12px] mr-[19px]" fill="none" stroke="#666">
        <path d="M.5.5h13v2H.5zM2 2.5v5h10v-5M7 7.5V11M4.5 11.5h5" />
      </svg>
      <div className="w-[6px] h-[2px] bg-[#666] mr-[4px]" />
      <div className="relative w-[100px] h-px bg-[#999]">
        <div className="absolute left-[47px] -top-[5px] w-[3px] h-[11px] bg-[#666]" />
      </div>
      <div className="relative w-[8px] h-[8px] ml-[4px]">
        <div className="absolute left-0 top-[3px] w-[8px] h-[2px] bg-[#666]" />
        <div className="absolute left-[3px] top-0 w-[2px] h-[8px] bg-[#666]" />
      </div>
      <span className="ml-[15px] w-[22px]">97%</span>
      <svg viewBox="0 0 13 13" className="w-[13px] h-[13px] ml-[18px] mr-[7px]" fill="none" stroke="#666">
        <path d="M.5.5h12v12H.5zM6.5 2v2.500M6.5 8.500V11M2 6.5h2.500M8.500 6.5H11" />
      </svg>
    </div>
  );
}

export default function App() {
  return (
    <div className="flex w-[1920px] h-[1080px] overflow-hidden tracking-[-0.1px] font-['Noto_Sans','Open_Sans',sans-serif]">
      <Taskbar />
      <div className="flex-1 min-w-0 flex flex-col">
        <TitleBar />
        <Ribbon />
        <div className="flex-1 min-h-0 flex bg-[#e6e6e6]">
          <ThumbPane />
          <div className="w-[19px] shrink-0 flex flex-col pt-[4px] pb-[3px]">
            <ScrollBtn up />
            <div className="w-[15px] h-[404px] bg-white border-x border-b border-[#ababab]" />
            <div className="w-[15px] flex-1 bg-[#c6c6c6]" />
            <ScrollBtn up={false} />
          </div>
          <div className="w-[995px] shrink-0 border-l border-[#c6c6c6] flex flex-col">
            <div className="pt-[5px] pl-[48px]">
              <TopRuler />
            </div>
            <div className="mt-[95px] pl-[7px] flex items-start">
              <LeftRuler />
              <Slide />
            </div>
          </div>
          <div className="w-[16px] shrink-0 flex flex-col pt-[2px]">
            <ScrollBtn up />
            <div className="w-[15px] h-[68px] bg-[#c6c6c6]" />
            <div className="w-[15px] h-[68px] bg-white border border-[#ababab]" />
            <div className="w-[15px] h-[680px] bg-[#c6c6c6]" />
            <ScrollBtn up={false} />
            <div className="w-[15px] mt-[5px] flex flex-col items-center gap-[8px] text-[#555]">
              <div className="flex flex-col items-center gap-px">
                <Caret className="rotate-180" />
                <Caret className="rotate-180" />
              </div>
              <div className="flex flex-col items-center gap-px">
                <Caret />
                <Caret />
              </div>
            </div>
          </div>
          <AnimPane />
          <FormatPane />
        </div>
        <StatusBar />
      </div>
    </div>
  );
}
